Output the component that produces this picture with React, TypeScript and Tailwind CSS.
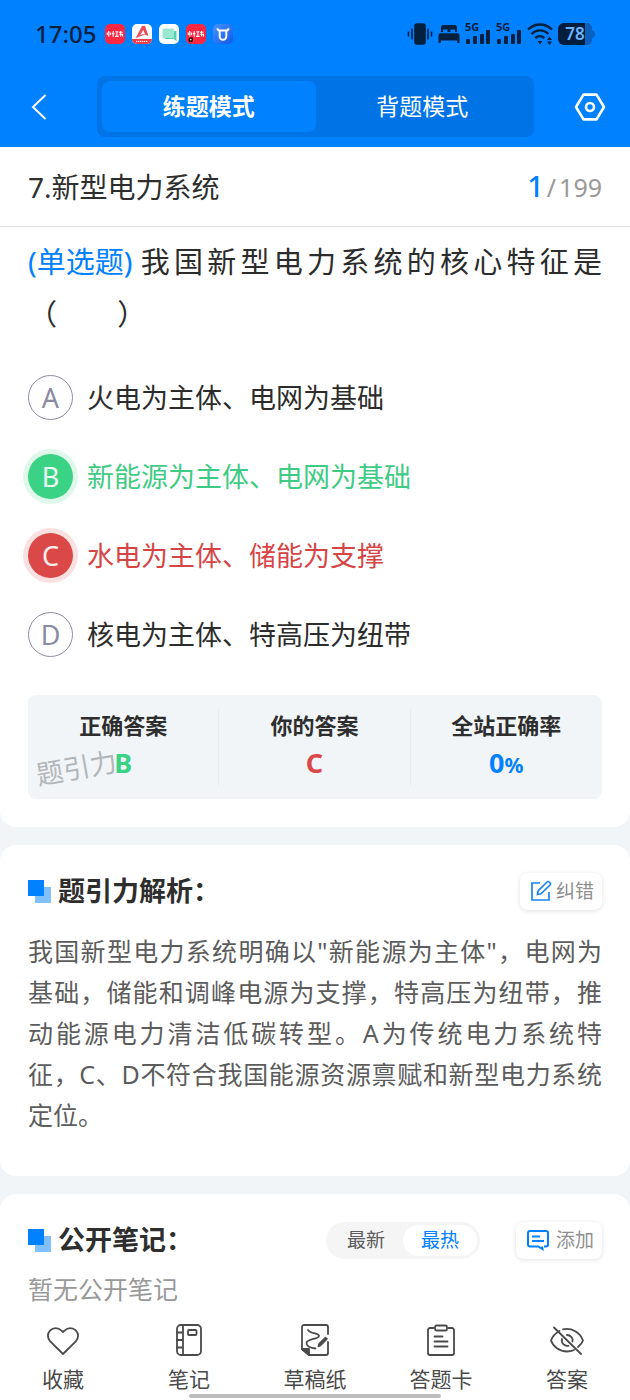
import type { ReactNode } from "react";

const FONT = "font-['Noto_Sans','Noto_Sans_CJK_SC',sans-serif]";

const options = [
  { key: "A", text: "火电为主体、电网为基础", state: "idle" },
  { key: "B", text: "新能源为主体、电网为基础", state: "right" },
  { key: "C", text: "水电为主体、储能为支撑", state: "wrong" },
  { key: "D", text: "核电为主体、特高压为纽带", state: "idle" },
];

const circleStyles: Record<string, string> = {
  idle: "border-[1px] border-[#8b8ca3] text-[#8b8ca3]",
  right: "bg-[#3ad385] text-white/90 ring-[5px] ring-[#dff8eb]",
  wrong: "bg-[#db4848] text-white/90 ring-[5px] ring-[#fae1e1]",
};

const textStyles: Record<string, string> = {
  idle: "text-[#2c2c2c]",
  right: "text-[#3fcb84]",
  wrong: "text-[#d64545]",
};

const analysis = [
  "我国新型电力系统明确以\"新能源为主体\"，电网为",
  "基础，储能和调峰电源为支撑，特高压为纽带，推",
  "动能源电力清洁低碳转型。A为传统电力系统特",
  "征，C、D不符合我国能源资源禀赋和新型电力系统",
];

function RedBookIcon({ badge }: { badge?: boolean }) {
  return (
    <svg viewBox="0 0 20 20" className="h-5 w-5">
      <rect width="20" height="20" rx="5" fill="#ff2741" />
      <g stroke="#fff" strokeWidth="1.1" fill="none">
        <path d="M3.8 7v5.8M2.3 8.5v2.6M5.4 8.5v2.6M8.2 7v5.8M6.8 9.6h2.6M10.4 7.8h3M11.9 7.8v4.5M10 12.4h3.7M14 8.2h3.5M15.6 7v5.4M14.3 10.3h3.2v2.2" />
      </g>
      {badge && (
        <>
          <rect x="2.6" y="13.5" width="4.4" height="4.6" rx="1.4" fill="#200" />
          <circle cx="4.8" cy="15.6" r="0.8" fill="#fff" />
        </>
      )}
    </svg>
  );
}

function SignalIcon() {
  return (
    <svg viewBox="0 -4 26 30" className="h-[30px] w-[26px]" fill="currentColor">
      <text x="0" y="8" fontSize="11" fontWeight="700">5G</text>
      <rect x="1" y="16" width="4" height="5" rx="1" />
      <rect x="8" y="13" width="4" height="8" rx="1" />
      <rect x="15" y="11" width="4" height="10" rx="1" />
      <rect x="21" y="7" width="4" height="14" rx="1" />
    </svg>
  );
}

function StatusBar() {
  return (
    <div className="flex h-[67px] items-center justify-between pr-[35px] pl-[35px] text-[#04203f]">
      <div className="flex items-center gap-[7px]">
        <span className="mr-[2px] text-[24px] leading-[30px] font-medium">17:05</span>
        <RedBookIcon />
        <svg viewBox="0 0 20 20" className="h-5 w-5">
          <rect width="20" height="20" rx="5" fill="#fff" />
          <path d="M0 15h20a5 5 0 0 1-5 5H5a5 5 0 0 1-5-5z" fill="#ee3c48" />
          <path d="M3.5 14.500 10 2l3-.2 3.400 10-3-.7-2.200-5-3.200 5.400z" fill="#ee4b59" />
          <path d="m3.500 14.500 6.500-4.300 4 .4-4 1z" fill="#d9364a" />
          <path d="M4 17.400h12" stroke="#fff" strokeWidth="1" strokeDasharray="1.400 .6" />
        </svg>
        <svg viewBox="0 0 20 20" className="h-5 w-5">
          <rect width="20" height="20" rx="5" fill="#fff" />
          <path d="M6 7h11.500v10l-2.500-2H6z" fill="#4fd3b0" />
          <rect x="3.500" y="4.500" width="11.500" height="9.500" rx="1" fill="#9be8d0" />
        </svg>
        <RedBookIcon badge />
        <svg viewBox="0 0 20 20" className="h-5 w-5">
          <defs>
            <linearGradient id="bull" x1="0" y1="0" x2="1" y2="1">
              <stop offset="0" stopColor="#4793ff" />
              <stop offset="1" stopColor="#1458e8" />
            </linearGradient>
          </defs>
          <rect width="20" height="20" rx="5" fill="url(#bull)" />
          <path d="M4.500 4.200c0 2 1 2.400 2.800 2.400h5.400c1.800 0 2.800-.4 2.800-2.400M6.700 7v5.200a3.300 3.600 0 0 0 6.600 0V7" fill="none" stroke="#fff" strokeWidth="2" />
        </svg>
      </div>
      <div className="flex items-center gap-[5px]">
        <svg viewBox="0 0 26 22" className="h-[22px] w-[26px]" stroke="currentColor" strokeWidth="1.600">
          <rect x="8" y="1" width="10" height="20" rx="2" fill="currentColor" />
          <path d="M5 5.500v11M1.500 8.500v5M21 5.500v11M24.500 8.500v5" />
        </svg>
        <svg viewBox="0 0 22 20" className="h-5 w-[22px]" fill="currentColor">
          <path d="M3 8V3.500A2.500 2.500 0 0 1 5.500 1h11A2.500 2.500 0 0 1 19 3.500V8h-2V5.500h-4.500V8h-3V5.500H5V8zM2.500 9.300h17a2 2 0 0 1 2 2V19h-2.300v-2.500H2.800V19H.5v-7.700a2 2 0 0 1 2-2z" />
        </svg>
        <SignalIcon />
        <SignalIcon />
        <svg viewBox="0 0 26 22" className="h-[22px] w-[26px]" fill="none" stroke="currentColor" strokeWidth="2.400">
          <path d="M1 6.500C8-.2 18-.2 25 6.500M4.500 11c5-4.800 12-4.800 17 0M8.300 15c3-2.500 6-2.500 9 0" />
          <path d="M10.500 18h5L13 21.500zM20 17h5l-2.500-3.500zM20 18.500h5L22.500 22z" fill="currentColor" stroke="none" />
        </svg>
        <svg viewBox="0 0 37 22" className="h-[22px] w-[37px]">
          <path d="M6 0h23a5 5 0 0 1 5 5v2q3 1 3 4t-3 4v2a5 5 0 0 1-5 5H6z" fill="#0b5fbd" />
          <path d="M6 0h21v22H6a6 6 0 0 1-6-6V6a6 6 0 0 1 6-6z" fill="#031d3d" />
          <text x="17" y="17" textAnchor="middle" fontSize="17" fontWeight="600" fill="#6db4ff">78</text>
        </svg>
      </div>
    </div>
  );
}

function SectionTitle({ children }: { children: ReactNode }) {
  return (
    <h2 className="flex flex-1 items-center gap-[7px] text-[27px] leading-[38px] font-bold text-[#2e2e2e]">
      <svg viewBox="0 0 23 23" className="h-[23px] w-[23px]">
        <rect x="7" y="7" width="16" height="16" fill="#80c0ff" />
        <rect width="16" height="16" fill="#0081ff" />
      </svg>
      {children}
    </h2>
  );
}

function NavItem({ label, children }: { label: string; children: ReactNode }) {
  return (
    <button className="flex flex-1 flex-col items-center gap-[7px] text-[#4a4a4a]">
      <svg viewBox="0 0 34 34" className="h-[34px] w-[34px]" fill="none" stroke="currentColor" strokeWidth="1.800" strokeLinecap="round" strokeLinejoin="round">
        {children}
      </svg>
      <span className="text-[21px] leading-[30px]">{label}</span>
    </button>
  );
}

export default function App() {
  return (
    <div className={`flex min-h-screen flex-col bg-[#f1f5f8] ${FONT}`}>
      <header className="bg-[#0081ff]">
        <StatusBar />
        <div className="flex h-20 items-center justify-between pr-[24px] pb-[1px] pl-[30px]">
          <button aria-label="返回" className="text-white">
            <svg viewBox="0 0 18 28" className="h-7 w-[18px]" fill="none" stroke="currentColor" strokeWidth="2">
              <path d="M15.500 2 3 14l12.500 12" />
            </svg>
          </button>
          <div className="mr-[40px] ml-[49px] flex h-[61px] flex-1 rounded-lg bg-[#0074e6] p-[5px] text-[23px] leading-[32px] text-white">
            <button className="flex-1 rounded-lg bg-[#0081ff] pb-[2px] font-bold">练题模式</button>
            <button className="flex-1 pb-[2px]">背题模式</button>
          </div>
          <button aria-label="设置" className="text-white">
            <svg viewBox="0 0 32 28" className="h-7 w-8" fill="none" stroke="currentColor" strokeWidth="2.600" strokeLinejoin="round">
              <path d="M9.500 1.600h13L30 14l-7.500 12.400h-13L2 14z" />
              <circle cx="16" cy="14" r="4" />
            </svg>
          </button>
        </div>
      </header>

      <main className="flex flex-1 flex-col gap-[18px]">
        <section className="rounded-b-[16px] bg-white pb-7">
          <div className="flex h-20 items-center justify-between border-b border-[#dcdfdf] px-7">
            <h1 className="text-[28px] leading-[40px] text-[#2e2e2e]">7.新型电力系统</h1>
            <p className="flex items-baseline gap-[3px] text-[25px] leading-[40px] text-[#999]">
              <span className="text-[29px] font-medium text-[#0081ff]">1</span>
              <span>/</span>
              <span>199</span>
            </p>
          </div>
          <div className="px-7 pt-[9px]">
            <p className="text-justify text-[29px] leading-[52px] text-[#2c2c2c]">
              <span className="mr-[4px] inline-block text-[#0081ff]">(单选题)</span>
              我国新型电力系统的核心特征是（&nbsp;&nbsp;&nbsp;&nbsp;&nbsp;&nbsp;&nbsp;&nbsp;）
            </p>
            <ul className="mt-[18px]">
              {options.map((o) => (
                <li key={o.key}>
                  <button className="flex h-[79px] w-full items-center gap-[14px] text-left">
                    <span className={`flex h-[45px] w-[45px] items-center justify-center rounded-full text-[27px] leading-[40px] ${circleStyles[o.state]}`}>
                      {o.key}
                    </span>
                    <span className={`text-[27px] leading-[40px] ${textStyles[o.state]}`}>{o.text}</span>
                  </button>
                </li>
              ))}
            </ul>
            <div className="relative mt-[21px] rounded-lg bg-[#f1f5f8] py-[13px]">
              <dl className="grid grid-cols-3 divide-x divide-[#e9edf1] text-center text-[22px] leading-[34px] font-bold">
                <div>
                  <dt className="text-[#2e2e2e]">正确答案</dt>
                  <dd className="text-[27px] leading-[42px] text-[#3ad385]">B</dd>
                </div>
                <div>
                  <dt className="text-[#2e2e2e]">你的答案</dt>
                  <dd className="text-[27px] leading-[42px] text-[#db4848]">C</dd>
                </div>
                <div>
                  <dt className="text-[#2e2e2e]">全站正确率</dt>
                  <dd className="text-[27px] leading-[42px] text-[#0081ff]">
                    0<span className="text-[21px]">%</span>
                  </dd>
                </div>
              </dl>
              <span className="absolute top-[53px] left-2 -rotate-10 text-[27px] leading-[40px] text-[#b3b6b9]">题引力</span>
            </div>
          </div>
        </section>

        <section className="rounded-[16px] bg-white px-7 pt-[27px] pb-10">
          <div className="flex items-center">
            <SectionTitle>题引力解析：</SectionTitle>
            <button className="flex items-center gap-1 rounded-lg px-2 text-[19px] leading-[37px] text-[#8f8f8f] shadow-[0_1px_5px_rgba(0,0,0,0.12)]">
              <svg viewBox="0 0 24 24" className="h-6 w-6" fill="none" stroke="#1a84ee" strokeWidth="1.700">
                <path d="M12 4H4v17h17v-8" />
                <path d="m9.500 15.500.6-3.600 8.900-8.900a1.500 1.500 0 0 1 2.200 0l.8.8a1.500 1.500 0 0 1 0 2.200L13 14.800z" />
              </svg>
              纠错
            </button>
          </div>
          <p className="mt-[21px] text-[25px] leading-[41px] text-[#5c5c5c]">
            {analysis.map((line) => (
              <span key={line} className="block [text-align-last:justify]">{line}</span>
            ))}
            定位。
          </p>
        </section>

        <section className="flex-1 rounded-t-[16px] bg-white px-7 pt-[27px]">
          <div className="flex items-center">
            <SectionTitle>公开笔记：</SectionTitle>
            <div className="mr-[36px] flex rounded-full bg-[#f5f5f5] p-[3px] text-[19px] leading-[31px]">
              <button className="px-[18px] text-[#5c5c5c]">最新</button>
              <button className="rounded-full bg-white px-[18px] text-[#0081ff]">最热</button>
            </div>
            <button className="flex items-center gap-1 rounded-lg px-2 text-[19px] leading-[37px] text-[#8f8f8f] shadow-[0_1px_5px_rgba(0,0,0,0.12)]">
              <svg viewBox="0 0 28 24" className="h-6 w-7" fill="none" stroke="#0081ff" strokeWidth="2">
                <path d="M20 18.500h2a2 2 0 0 0 2-2V5a2 2 0 0 0-2-2H6a2 2 0 0 0-2 2v11.500a2 2 0 0 0 2 2h8l4.500 2.500-.5-2.500M8 8.500h8M8 13h12" />
              </svg>
              添加
            </button>
          </div>
          <p className="mt-[11px] text-[25px] leading-[38px] text-[#999]">暂无公开笔记</p>
        </section>
      </main>

      <nav className="sticky bottom-0 flex h-[84px] bg-white pt-[7px]">
        <NavItem label="收藏">
          <path d="M17 31 4.200 18.300a7.800 7.800 0 0 1 0-11 7.800 7.800 0 0 1 11 0L17 9l1.800-1.700a7.800 7.800 0 0 1 11 0 7.800 7.800 0 0 1 0 11z" />
        </NavItem>
        <NavItem label="笔记">
          <rect x="5" y="2" width="24" height="30" rx="4" />
          <path d="M11 2v30M5 9.500h6M5 17h6M5 24.500h6" />
          <rect x="16" y="7" width="8.500" height="5" rx="1" />
        </NavItem>
        <NavItem label="草稿纸">
          <path d="M30 19v11a2 2 0 0 1-2 2H11l-7-6V4a2 2 0 0 1 2-2h22a2 2 0 0 1 2 2v7" />
          <path d="M4 26h7v6z" fill="currentColor" />
          <path d="M10 7c3 4.500 11 2.500 11 6 0 3.300-12.500 2.500-12.500 7 0 3.500 5 5 9 5.500" />
          <path d="m20 23.500.8-3 6.700-6.500 2 2-6.700 6.700z" fill="currentColor" strokeWidth="1" />
        </NavItem>
        <NavItem label="答题卡">
          <path d="M9.500 5H6a2 2 0 0 0-2 2v23a2 2 0 0 0 2 2h22a2 2 0 0 0 2-2V7a2 2 0 0 0-2-2h-3.500" />
          <rect x="11" y="2.500" width="12" height="5" rx="1.500" />
          <path d="M10.500 13.500h8M10.500 18.500h13M10.500 23.500h13" />
        </NavItem>
        <NavItem label="答案">
          <path d="M4 4.500 31 31M9.500 8C5 10.500 2 14.500 1 17.500 3 23.500 9.500 28.500 17 28.500c2.500 0 5-.5 7-1.500M13 6.300c9-1.800 17 3.200 20 11.200-.8 2.200-2.500 4.500-5 6.500" />
          <path d="M12 16a5.500 5.500 0 0 0 6.500 6.800M17 12a5.500 5.500 0 0 1 5.500 6.500" />
        </NavItem>
        <div className="absolute bottom-[2px] left-[30%] h-1 w-[40%] rounded-full bg-[#bdbdbd]" />
      </nav>
    </div>
  );
}
